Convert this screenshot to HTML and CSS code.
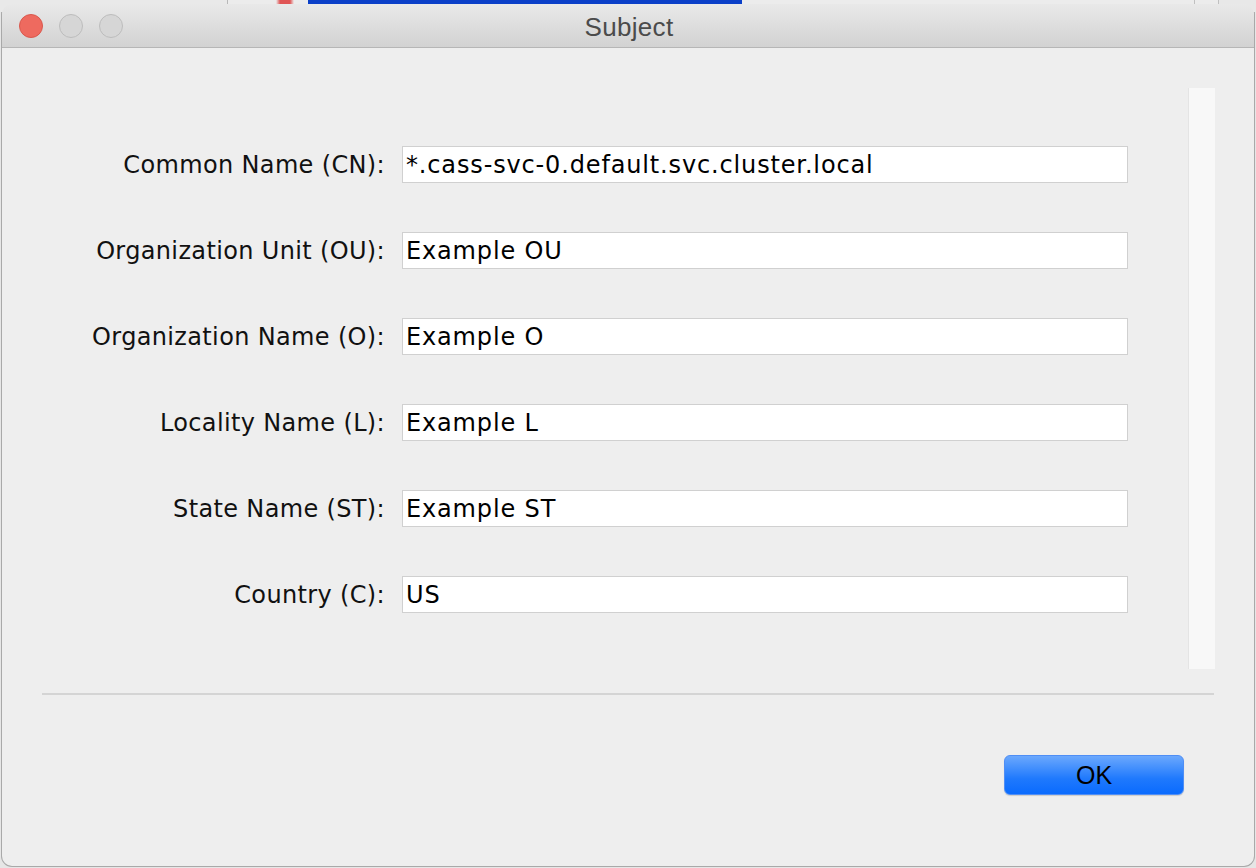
FILE: index.html
```html
<!DOCTYPE html>
<html>
<head>
<meta charset="utf-8">
<link rel="stylesheet" href="styles.css">
</head>
<body>
<div class="desktop">
  <div class="behind">
    <div class="seg seg-a"></div>
    <div class="seg seg-red"></div>
    <div class="seg seg-blue"></div>
    <div class="seg seg-b"></div>
  </div>
  <div class="window">
    <div class="titlebar">
      <div class="lights">
        <span class="light close"></span>
        <span class="light"></span>
        <span class="light"></span>
      </div>
      <div class="title">Subject</div>
    </div>
    <div class="content">
      <div class="upper">
        <div class="form">
          <label class="lbl">Common Name (CN):</label>
          <div class="field">*.cass-svc-0.default.svc.cluster.local</div>
          <label class="lbl">Organization Unit (OU):</label>
          <div class="field">Example OU</div>
          <label class="lbl">Organization Name (O):</label>
          <div class="field">Example O</div>
          <label class="lbl">Locality Name (L):</label>
          <div class="field">Example L</div>
          <label class="lbl">State Name (ST):</label>
          <div class="field">Example ST</div>
          <label class="lbl">Country (C):</label>
          <div class="field">US</div>
        </div>
        <div class="strip"></div>
      </div>
      <div class="sep"></div>
      <div class="buttons">
        <button class="ok">OK</button>
      </div>
    </div>
  </div>
</div>
</body>
</html>
```

FILE: styles.css
```css
html, body {
  margin: 0;
  padding: 0;
}
body {
  width: 1256px;
  height: 868px;
  overflow: hidden;
  background: #e4e4e4;
}
.desktop {
  width: 1256px;
  height: 868px;
  overflow: hidden;
  background: #e6e6e6;
}
.behind {
  display: flex;
  height: 12px;
}
.seg-a {
  width: 227px;
  background: #e9e9e9;
  border-right: 1px solid #b8b8b8;
}
.seg-red {
  width: 80px;
  background: linear-gradient(to right, #ececec 0, #ececec 48px, #e05555 52px, #e05555 62px, #ececec 66px);
}
.seg-blue {
  width: 434px;
  background: #0a3fc8;
}
.seg-b {
  flex: 1;
  background: linear-gradient(to right, #ececec 0, #ececec 452px, #c0c0c0 452px, #c0c0c0 453px, #ececec 453px, #ececec 476px, #c0c0c0 476px, #c0c0c0 477px, #e8e8e8 477px);
}
.window {
  margin-top: -9px;
  margin-left: 1px;
  width: 1252px;
  height: 862px;
  border: 1px solid #a9a9a9;
  border-top-color: #bdbdbd;
  border-radius: 11px;
  background: #eeeeee;
  overflow: hidden;
  display: flex;
  flex-direction: column;
}
.titlebar {
  height: 43px;
  flex: none;
  background: linear-gradient(to bottom, #e9e9e9, #d2d2d2);
  border-bottom: 1px solid #b6b6b6;
  position: relative;
  display: flex;
  align-items: center;
  justify-content: center;
}
.lights {
  position: absolute;
  left: 17px;
  top: 10px;
  display: flex;
  gap: 16px;
}
.light {
  width: 22px;
  height: 22px;
  border-radius: 50%;
  border: 1px solid #bcbcbc;
  background: #d6d6d6;
}
.light.close {
  background: #ee6a5f;
  border-color: #d8584d;
}
.title {
  font-family: "Liberation Sans", Arial, sans-serif;
  font-size: 26px;
  color: #4b4b4b;
  letter-spacing: 0.3px;
  margin-left: 2px;
  padding-top: 3px;
}
.content {
  flex: 1;
  display: flex;
  flex-direction: column;
}
.upper {
  display: flex;
  height: 621px;
}
.form {
  flex: 1;
  display: grid;
  grid-template-columns: 383px 726px;
  grid-auto-rows: 37px;
  column-gap: 17px;
  row-gap: 49px;
  padding-top: 98px;
  align-content: start;
}
.lbl {
  font-family: "DejaVu Sans", Verdana, sans-serif;
  font-size: 24px;
  letter-spacing: 0.35px;
  color: #111111;
  text-align: right;
  line-height: 37px;
  padding-top: 1px;
  white-space: nowrap;
}
.field {
  box-sizing: border-box;
  height: 37px;
  background: #ffffff;
  border: 1px solid #d0d0d0;
  padding-left: 3px;
  padding-top: 1px;
  font-family: "DejaVu Sans", Verdana, sans-serif;
  font-size: 24px;
  letter-spacing: 0.85px;
  color: #000000;
  line-height: 35px;
  white-space: nowrap;
  overflow: hidden;
}
.strip {
  width: 26px;
  margin-top: 40px;
  margin-right: 39px;
  background: #f8f8f8;
  border-left: 1px solid #e4e4e4;
}
.sep {
  margin: 24px 40px 0 40px;
  height: 2px;
  background: #d4d4d4;
}
.buttons {
  display: flex;
  justify-content: flex-end;
  padding-right: 70px;
  padding-top: 60px;
}
.ok {
  width: 180px;
  height: 40px;
  border: 1px solid #4f8ef5;
  border-radius: 6px;
  background: linear-gradient(to bottom, #6ba8fd, #1f79fd 60%, #0a6bfe);
  font-family: "Liberation Sans", Arial, sans-serif;
  font-size: 25px;
  color: #000000;
  padding: 0;
  box-shadow: 0 1px 1px rgba(0,0,0,0.15);
}
```
